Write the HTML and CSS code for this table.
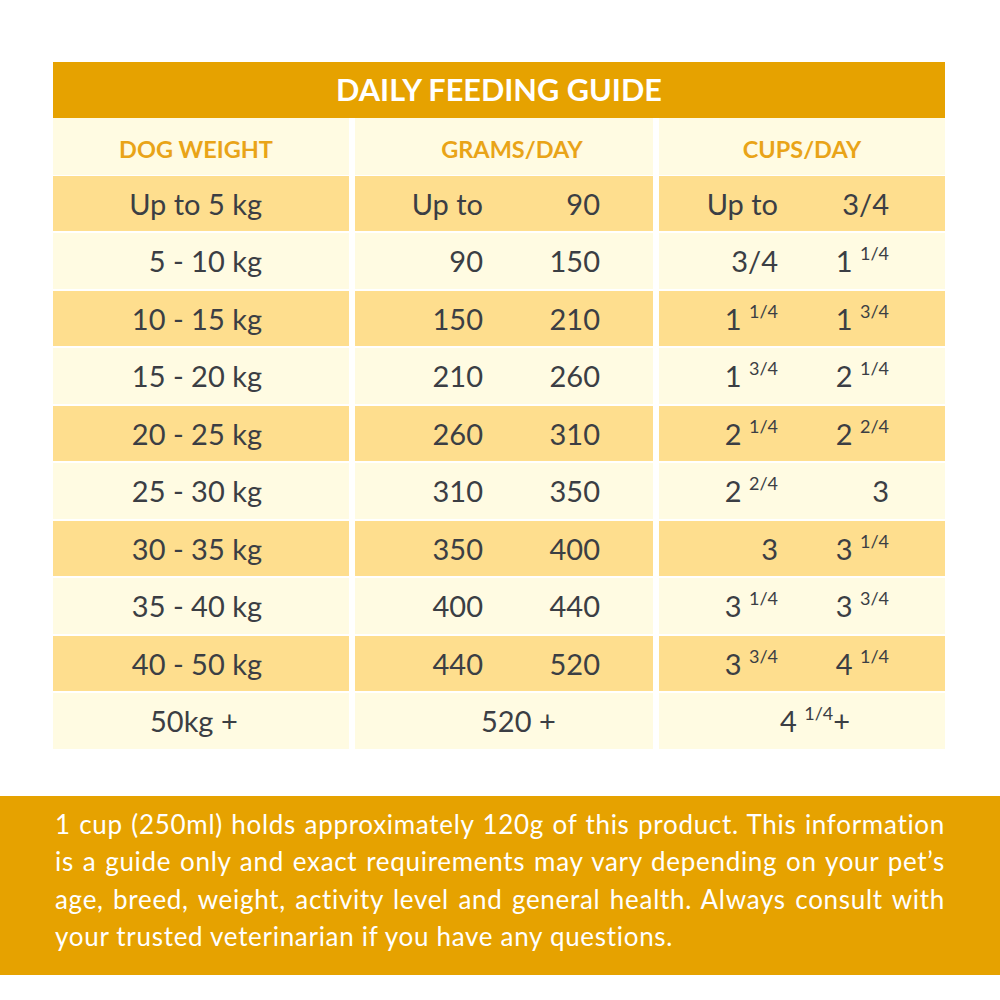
FILE: index.html
```html
<!DOCTYPE html>
<html lang="en">
<head>
<meta charset="utf-8">
<title>Daily Feeding Guide</title>
<link rel="stylesheet" href="styles.css">
</head>
<body>
<main class="page">
  <section class="guide">
    <h1 class="title">DAILY FEEDING GUIDE</h1>
    <div class="table">
      <div class="cell head head-weight">DOG WEIGHT</div>
      <div class="cell head head-grams">GRAMS/DAY</div>
      <div class="cell head head-cups">CUPS/DAY</div>

      <div class="cell dark weight">Up to 5 kg</div>
      <div class="cell dark grams"><span>Up to</span><span>90</span></div>
      <div class="cell dark cups"><span>Up to</span><span>3/4</span></div>

      <div class="cell light weight">5 - 10 kg</div>
      <div class="cell light grams"><span>90</span><span>150</span></div>
      <div class="cell light cups"><span>3/4</span><span>1 <sup>1/4</sup></span></div>

      <div class="cell dark weight">10 - 15 kg</div>
      <div class="cell dark grams"><span>150</span><span>210</span></div>
      <div class="cell dark cups"><span>1 <sup>1/4</sup></span><span>1 <sup>3/4</sup></span></div>

      <div class="cell light weight">15 - 20 kg</div>
      <div class="cell light grams"><span>210</span><span>260</span></div>
      <div class="cell light cups"><span>1 <sup>3/4</sup></span><span>2 <sup>1/4</sup></span></div>

      <div class="cell dark weight">20 - 25 kg</div>
      <div class="cell dark grams"><span>260</span><span>310</span></div>
      <div class="cell dark cups"><span>2 <sup>1/4</sup></span><span>2 <sup>2/4</sup></span></div>

      <div class="cell light weight">25 - 30 kg</div>
      <div class="cell light grams"><span>310</span><span>350</span></div>
      <div class="cell light cups"><span>2 <sup>2/4</sup></span><span>3</span></div>

      <div class="cell dark weight">30 - 35 kg</div>
      <div class="cell dark grams"><span>350</span><span>400</span></div>
      <div class="cell dark cups"><span>3</span><span>3 <sup>1/4</sup></span></div>

      <div class="cell light weight">35 - 40 kg</div>
      <div class="cell light grams"><span>400</span><span>440</span></div>
      <div class="cell light cups"><span>3 <sup>1/4</sup></span><span>3 <sup>3/4</sup></span></div>

      <div class="cell dark weight">40 - 50 kg</div>
      <div class="cell dark grams"><span>440</span><span>520</span></div>
      <div class="cell dark cups"><span>3 <sup>3/4</sup></span><span>4 <sup>1/4</sup></span></div>

      <div class="cell light last last-weight"><span>50kg +</span></div>
      <div class="cell light last last-grams"><span>520 +</span></div>
      <div class="cell light last last-cups"><span>4 <sup>1/4</sup>+</span></div>
    </div>
  </section>
  <footer class="note">
    <p>
      <span class="line">1 cup (250ml) holds approximately 120g of this product. This information</span>
      <span class="line">is a guide only and exact requirements may vary depending on your pet’s</span>
      <span class="line">age, breed, weight, activity level and general health. Always consult with</span>
      <span class="line line-last">your trusted veterinarian if you have any questions.</span>
    </p>
  </footer>
</main>
</body>
</html>
```

FILE: styles.css
```css
html, body {
  margin: 0;
  padding: 0;
  background: #ffffff;
}

body {
  font-family: "Lato", "Noto Sans", sans-serif;
  color: #3b3e44;
}

.page {
  width: 1000px;
  height: 1000px;
  padding-top: 62px;
  box-sizing: border-box;
}

.guide {
  width: 892px;
  margin-left: 53px;
}

.title {
  margin: 0;
  height: 56px;
  background: #e6a200;
  color: #ffffff;
  font-size: 30.7px;
  font-weight: 700;
  line-height: 56px;
  text-align: center;
}

.table {
  display: grid;
  grid-template-columns: 296px 298px 286px;
  grid-auto-rows: 55.5px;
  column-gap: 6px;
  row-gap: 2px;
}

.cell {
  display: flex;
  align-items: center;
  font-size: 29px;
  box-sizing: border-box;
}

.head {
  background: #fffbe2;
  color: #e9a418;
  font-size: 23.5px;
  font-weight: 700;
  justify-content: center;
  height: 57px;
  padding-top: 5px;
}

.head-weight { padding-right: 10px; }
.head-grams { padding-left: 16px; }

.dark { background: #fede8e; }
.light { background: #fffbe2; }

.weight {
  justify-content: flex-end;
  padding-right: 87px;
}

.grams, .cups {
  display: grid;
  align-items: center;
}

.grams { grid-template-columns: 128px 117px; }
.cups { grid-template-columns: 119px 111px; }

.grams span, .cups span {
  text-align: right;
  white-space: nowrap;
}

sup {
  font-size: 18px;
  vertical-align: 0;
  position: relative;
  top: -12px;
  line-height: 0;
}

.last span { white-space: nowrap; }
.last-weight { padding-left: 97px; }
.last-grams { padding-left: 126px; }
.last-cups { padding-left: 121px; }

.note {
  margin-top: 47px;
  background: #e6a200;
  color: #ffffff;
  padding: 10px 55px 19px 55px;
}

.note p {
  margin: 0;
  font-size: 26px;
  line-height: 37.5px;
  letter-spacing: 0.7px;
}

.line {
  display: block;
  text-align: justify;
  text-align-last: justify;
}

.line-last {
  text-align-last: left;
}
```
